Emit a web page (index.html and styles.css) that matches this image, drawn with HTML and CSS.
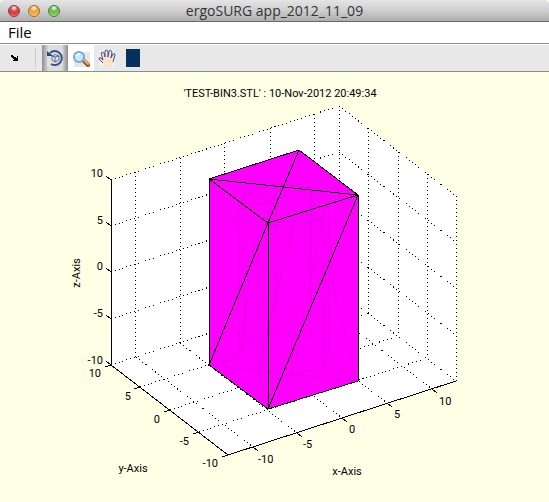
FILE: index.html
```
<!DOCTYPE html>
<html lang="en">
<head>
    <meta charset="UTF-8">
    <meta name="viewport" content="width=device-width, initial-scale=1.0">
    <title>ergoSURG app_2012_11_09</title>
    <link rel="stylesheet" href="styles.css">
</head>
<body>
    <div class="window">
        <header class="titlebar">
            <div class="window-buttons">
                <button class="dot dot-close" aria-label="Close"></button>
                <button class="dot dot-minimize" aria-label="Minimize"></button>
                <button class="dot dot-zoom" aria-label="Zoom"></button>
            </div>
            <h1 class="title">ergoSURG app_2012_11_09</h1>
        </header>

        <nav class="menubar">
            <button class="menu-item">File</button>
        </nav>

        <div class="toolbar">
            <button class="tool tool-dock" aria-label="Dock figure">
                <svg width="8" height="6" viewBox="0 0 8 6" shape-rendering="crispEdges">
                    <path d="M0 0h2v1h1v1h2v1h1v-2h1v5h-5v-1h1v-1h-1v-1h-1v-1h-1z"/>
                </svg>
            </button>
            <span class="separator"></span>
            <button class="tool tool-active" aria-label="Rotate 3D">
                <svg width="18" height="18" viewBox="0 0 18 18" fill="none" stroke="#3a5288">
                    <rect x="1" y="1" width="16" height="16" fill="#e0e0e0" stroke="none"/>
                    <path d="M4 4A7 7 0 1 1 5 15" stroke-width="2"/>
                    <path d="M1 2v5h6z" fill="#2c4479" stroke="none"/>
                    <path d="M6 7l3-1.500 4 1.500v4l-4 2-3-2zM6 7l3 1 4-1M9 8v5" stroke-width=".8"/>
                </svg>
            </button>
            <button class="tool tool-zoom" aria-label="Zoom in">
                <svg width="18" height="18" viewBox="0 0 18 18">
                    <rect x="2" y="3" width="16" height="15" fill="#e6e6e6"/>
                    <path d="M11 11l5 5" stroke="#8f5a2c" stroke-width="4" stroke-linecap="round"/>
                    <path d="M12 11l4 4" stroke="#efaa55" stroke-width="2" stroke-linecap="round"/>
                    <circle cx="7" cy="8" r="5" fill="#bdeefa" stroke="#80a5d6" stroke-width="2"/>
                    <path d="M4 7q1-2 4-2" fill="none" stroke="#fff" stroke-width="2"/>
                </svg>
            </button>
            <button class="tool" aria-label="Pan">
                <svg width="18" height="18" viewBox="0 0 18 18">
                    <rect x="1" y="1" width="16" height="16" fill="#f2f2f2"/>
                    <path d="M6 17L5 14 1 10Q1 8 3 9L5 11 3 4Q4 2 6 4L7 8 7 2Q8 0 10 2L10 8 11 2Q13 0 14 3L13 9 15 5Q17 4 17 6L15 13 14 17z" fill="#fbe3cb"/>
                    <path d="M5 14L1 10Q1 8 3 9L5 11 3 4Q4 2 6 4L7 8 7 2Q8 0 10 2L10 8 11 2Q13 0 14 3L13 9 15 5Q17 4 17 6L15 13" fill="none" stroke="#3e4f98"/>
                </svg>
            </button>
            <button class="tool tool-color" aria-label="Colour"><span class="swatch"></span></button>
        </div>

        <main class="figure">
            <svg class="plot" viewBox="0 72 549 430" role="img" aria-label="3D plot of TEST-BIN3.STL">
                <!-- axes walls and floor -->
                <path class="wall" d="M111 180L339 106 456 196V381L228 455 111 365z"/>

                <!-- grid -->
                <g class="grid">
                    <path d="M135 172V357M180 158V343M224 143V328M270 128V313M314 114V299M339 106V291M368 128V313M398 152V336M427 174V358M456 196V381"/>
                    <path d="M111 180L339 106 456 196M111 226L339 152 456 242M111 272L339 198 456 288M111 319L339 245 456 335M111 365L339 291 456 381"/>
                    <path d="M140 387L368 313M170 410L398 336M199 432L427 358"/>
                    <path d="M136 357L253 447M180 343L297 433M225 328L342 418M270 313L387 403M315 299L432 389"/>
                </g>

                <!-- axes and ticks -->
                <g class="axis">
                    <path d="M111 180V365L228 455 456 381"/>
                    <path d="M111 180l-5-4M111 226l-5-4M111 272l-5-4M111 319l-5-4M111 365l-5-4"/>
                    <path d="M111 365l-6 2M140 387l-6 2M170 410l-6 2M199 432l-6 2M228 455l-6 2"/>
                    <path d="M253 447l5 4M297 433l5 4M342 418l5 4M387 403l5 4M432 389l5 4"/>
                </g>

                <!-- solid -->
                <path class="solid" d="M209 179L299 150 358 195V381L268 409 209 365z"/>
                <g class="inner">
                    <path d="M299 150V186L310 188M244 191L276 184 311 188 329 202 321 219 292 228 258 224 239 210z"/>
                    <path d="M239 210V358M245 192V341M258 224V371M292 228V375M323 218V367M329 202V351M276 184V333M311 188V337"/>
                    <path d="M239 358L258 371 292 375 323 367 329 351 311 337 276 333 245 341z"/>
                    <path d="M209 179L239 230M209 179L268 223 276 184M244 191L329 222M239 210L311 188M268 223L321 219M258 224L240 350M292 228L268 330 259 371M323 218L294 368M329 266L356 381M311 188L310 290"/>
                    <path d="M209 365L239 358M209 365L258 371M268 409L258 371M268 409L292 375M358 381L323 367M358 381L327 358M358 381L292 375"/>
                </g>
                <g class="edges">
                    <path d="M209 179L299 150 358 195 268 223z"/>
                    <path d="M209 179L358 195M299 150L268 223"/>
                    <path d="M209 179V365L268 409 358 381V195M268 223V409"/>
                    <path d="M268 223L209 365M358 195L268 409"/>
                </g>

                <!-- labels -->
                <g class="labels">
                    <text x="280" y="97" text-anchor="middle">'TEST-BIN3.STL' : 10-Nov-2012 20:49:34</text>
                    <g text-anchor="end">
                        <text x="103" y="177">10</text>
                        <text x="103" y="224">5</text>
                        <text x="103" y="270">0</text>
                        <text x="103" y="317">-5</text>
                        <text x="103" y="364">-10</text>
                        <text x="101" y="377">10</text>
                        <text x="131" y="400">5</text>
                        <text x="160" y="423">0</text>
                        <text x="189" y="445">-5</text>
                        <text x="218" y="467">-10</text>
                    </g>
                    <text x="258" y="463">-10</text>
                    <text x="303" y="448">-5</text>
                    <text x="349" y="433">0</text>
                    <text x="394" y="418">5</text>
                    <text x="439" y="405">10</text>
                    <text x="347" y="475" text-anchor="middle">x-Axis</text>
                    <text x="133" y="472" text-anchor="middle">y-Axis</text>
                    <text x="80" y="273" text-anchor="middle" transform="rotate(-90 80 273)">z-Axis</text>
                </g>
            </svg>
        </main>
    </div>
</body>
</html>
```
FILE: styles.css
```
* {
    margin: 0;
    padding: 0;
    box-sizing: border-box;
}

body {
    background: #ffffe6;
    font-family: "Liberation Sans", Arial, sans-serif;
    color: #000;
}

.window {
    min-height: 100vh;
    display: flex;
    flex-direction: column;
}

button {
    border: none;
    background: none;
    font: inherit;
}

.titlebar {
    display: grid;
    grid-template-columns: 1fr auto 1fr;
    align-items: center;
    height: 22px;
    padding: 0 8px;
    background: linear-gradient(#e4e4e4, #cfcfcf 50%, #aeaeae);
    border-bottom: 1px solid #686868;
    border-radius: 4px 4px 0 0;
}

.window-buttons {
    display: flex;
    gap: 8px;
}

.dot {
    width: 12px;
    height: 12px;
    border: 1px solid;
    border-radius: 50%;
}

.dot-close {
    border-color: #8f3a3a;
    background: radial-gradient(circle at 50% 20%, #fff 0, #e0484c 35%, #d93a40 60%, #ff9a98 100%);
}

.dot-minimize {
    border-color: #9a6a2a;
    background: radial-gradient(circle at 50% 20%, #fff 0, #eba43c 35%, #f0ac3d 60%, #ffe795 100%);
}

.dot-zoom {
    border-color: #4b7a35;
    background: radial-gradient(circle at 50% 20%, #fff 0, #6dba4d 35%, #74c152 60%, #c9f7a0 100%);
}

.title {
    font-family: "Open Sans", sans-serif;
    font-size: 14px;
    font-weight: normal;
    line-height: 20px;
    color: #333;
}

.menubar {
    height: 22px;
    padding: 0 8px;
    background: #fff;
    border-bottom: 1px solid #8c8c8c;
}

.menu-item {
    font-family: "Open Sans", sans-serif;
    font-size: 15px;
    line-height: 21px;
}

.toolbar {
    display: flex;
    height: 28px;
    padding-left: 2px;
    background: #e8e8e8;
    border-top: 1px solid #fff;
    border-bottom: 1px solid #8c8c8c;
}

.tool {
    display: flex;
    align-items: center;
    justify-content: center;
    width: 26px;
}

.tool-active {
    background: linear-gradient(90deg, #8e8e8e, #dcdcdc 25%, #dcdcdc 75%, #8e8e8e);
}

.tool-zoom {
    background: #fff;
}

.separator {
    width: 1px;
    margin: 3px 6px 3px 7px;
    background: #cbcbcb;
}

.swatch {
    width: 14px;
    height: 18px;
    background: #08305c;
}

.figure {
    flex: 1;
}

.plot {
    display: block;
    width: 100%;
    height: auto;
}

.plot path {
    fill: none;
    shape-rendering: crispEdges;
}

.plot .wall {
    fill: #fff;
}

.grid {
    stroke: #000;
    stroke-dasharray: 1 3;
}

.axis,
.edges {
    stroke: #000;
}

.plot .solid {
    fill: #f0f;
}

.plot .inner path {
    stroke: #ec00ec;
    shape-rendering: auto;
}

.labels {
    font-family: Roboto, "Liberation Sans", sans-serif;
    font-size: 11px;
}
```
